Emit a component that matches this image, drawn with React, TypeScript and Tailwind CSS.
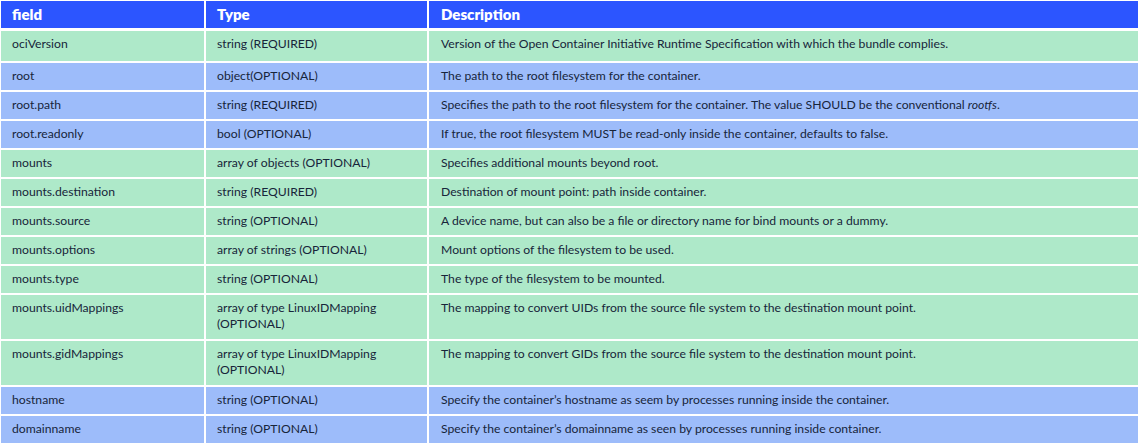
import React from 'react';

type Row = {
  field: string;
  type: React.ReactNode;
  desc: React.ReactNode;
  tone: 'green' | 'blue';
  tall?: boolean;
};

const ROWS: Row[] = [
  {
    field: 'ociVersion',
    type: 'string (REQUIRED)',
    desc: 'Version of the Open Container Initiative Runtime Specification with which the bundle complies.',
    tone: 'green',
  },
  { field: 'root', type: 'object(OPTIONAL)', desc: 'The path to the root filesystem for the container.', tone: 'blue' },
  {
    field: 'root.path',
    type: 'string (REQUIRED)',
    desc: (
      <>
        Specifies the path to the root filesystem for the container. The value SHOULD be the conventional <em>rootfs</em>.
      </>
    ),
    tone: 'blue',
  },
  {
    field: 'root.readonly',
    type: 'bool (OPTIONAL)',
    desc: 'If true, the root filesystem MUST be read-only inside the container, defaults to false.',
    tone: 'blue',
  },
  { field: 'mounts', type: 'array of objects (OPTIONAL)', desc: 'Specifies additional mounts beyond root.', tone: 'green' },
  {
    field: 'mounts.destination',
    type: 'string (REQUIRED)',
    desc: 'Destination of mount point: path inside container.',
    tone: 'green',
  },
  {
    field: 'mounts.source',
    type: 'string (OPTIONAL)',
    desc: 'A device name, but can also be a file or directory name for bind mounts or a dummy.',
    tone: 'green',
  },
  {
    field: 'mounts.options',
    type: 'array of strings (OPTIONAL)',
    desc: 'Mount options of the filesystem to be used.',
    tone: 'green',
  },
  { field: 'mounts.type', type: 'string (OPTIONAL)', desc: 'The type of the filesystem to be mounted.', tone: 'green' },
  {
    field: 'mounts.uidMappings',
    type: (
      <>
        array of type LinuxIDMapping
        <br />
        (OPTIONAL)
      </>
    ),
    desc: 'The mapping to convert UIDs from the source file system to the destination mount point.',
    tone: 'green',
    tall: true,
  },
  {
    field: 'mounts.gidMappings',
    type: (
      <>
        array of type LinuxIDMapping
        <br />
        (OPTIONAL)
      </>
    ),
    desc: 'The mapping to convert GIDs from the source file system to the destination mount point.',
    tone: 'green',
    tall: true,
  },
  {
    field: 'hostname',
    type: 'string (OPTIONAL)',
    desc: 'Specify the container\u2019s hostname as seem by processes running inside the container.',
    tone: 'blue',
  },
  {
    field: 'domainname',
    type: 'string (OPTIONAL)',
    desc: 'Specify the container\u2019s domainname as seen by processes running inside container.',
    tone: 'blue',
  },
];

export default function App() {
  return (
    <div
      className="w-[1140px] h-[444px] bg-white pl-[1px] pr-[2px] pt-[1px] overflow-hidden"
      style={{ fontFamily: 'Lato, "Open Sans", sans-serif' }}
    >
      {/* Header */}
      <div className="grid grid-cols-[203px_221px_1fr] gap-x-[2px] mb-[3px]">
        {['field', 'Type', 'Description'].map((h, i) => (
          <div
            key={h}
            className={`h-[27px] bg-[#2c55ff] text-white font-extrabold text-[15px] leading-[27px] ${i === 2 ? 'pl-[12px]' : 'pl-[11px]'}`}
          >
            {h}
          </div>
        ))}
      </div>

      {/* Body */}
      <div className="grid grid-cols-[203px_221px_1fr] gap-x-[2px] gap-y-[2px]">
        {ROWS.map((r, idx) => {
          const bg = r.tone === 'green' ? 'bg-[#aee9c9]' : 'bg-[#9dbcfa]';
          const h = r.tall ? 'h-[44px]' : idx === 0 ? 'h-[30px]' : 'h-[27px]';
          const cell = `${bg} ${h} pt-[5px] text-[12.2px] leading-[16px] text-[#17253a]`;
          return (
            <React.Fragment key={r.field}>
              <div className={`${cell} pl-[11px]`}>{r.field}</div>
              <div className={`${cell} pl-[11px]`}>{r.type}</div>
              <div className={`${cell} pl-[12px]`}>{r.desc}</div>
            </React.Fragment>
          );
        })}
      </div>
    </div>
  );
}
